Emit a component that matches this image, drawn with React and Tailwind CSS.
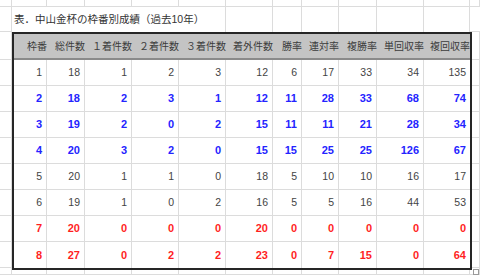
import React from 'react';

// column widths of the sheet (A .. M), px
const sheetCols = [12, 35, 38, 47, 47, 47, 47, 29, 37, 38, 47, 46, 10];
// inner widths of table columns B .. L (inside the 2px frame)
const tableCols = [33, 38, 47, 47, 47, 47, 29, 37, 38, 47, 46];

const headers = ['枠番', '総件数', '１着件数', '２着件数', '３着件数', '着外件数', '勝率', '連対率', '複勝率', '単回収率', '複回収率'];

const rows = [
  { tone: 'plain', v: [1, 18, 1, 2, 3, 12, 6, 17, 33, 34, 135] },
  { tone: 'blue', v: [2, 18, 2, 3, 1, 12, 11, 28, 33, 68, 74] },
  { tone: 'blue', v: [3, 19, 2, 0, 2, 15, 11, 11, 21, 28, 34] },
  { tone: 'blue', v: [4, 20, 3, 2, 0, 15, 15, 25, 25, 126, 67] },
  { tone: 'plain', v: [5, 20, 1, 1, 0, 18, 5, 10, 10, 16, 17] },
  { tone: 'plain', v: [6, 19, 1, 0, 2, 16, 5, 5, 16, 44, 53] },
  { tone: 'red', v: [7, 20, 0, 0, 0, 20, 0, 0, 0, 0, 0] },
  { tone: 'red', v: [8, 27, 0, 2, 2, 23, 0, 7, 15, 0, 64] },
];

const toneClass = {
  plain: 'text-[#444] text-[10.5px]',
  blue: 'text-[#2424ff] text-[11px] font-bold',
  red: 'text-[#ff1f1f] text-[11px] font-bold',
};

const GridRow = ({ h }) => (
  <div className="flex" style={{ height: h }}>
    {sheetCols.map((w, i) => (
      <div key={i} className="border-r border-b border-[#dcdcdc] shrink-0" style={{ width: w }} />
    ))}
  </div>
);

// side column cells (A and M) next to the framed table
const SideCol = ({ w }) => (
  <div className="flex flex-col shrink-0" style={{ width: w }}>
    <div className="h-[28px] border-r border-b border-[#dcdcdc]" />
    {rows.map((_, i) => (
      <div key={i} className="h-[26px] border-r border-b border-[#dcdcdc]" />
    ))}
    <div className="h-[2px] border-r border-[#dcdcdc]" />
  </div>
);

export default function App() {
  return (
    <div className="w-[480px] h-[275px] overflow-hidden bg-white font-['Liberation_Sans','Noto_Sans_CJK_JP',sans-serif]">
      <GridRow h={7} />

      {/* Title row */}
      <div className="flex h-[25px]">
        <div className="w-[12px] shrink-0 border-r border-b border-[#dcdcdc]" />
        <div className="w-[214px] shrink-0 border-r border-[#dcdcdc] flex items-center pl-[2px] text-[10.5px] text-[#333] whitespace-nowrap">
          表．中山金杯の枠番別成績（過去10年）
        </div>
        {sheetCols.slice(6, 12).map((w, i) => (
          <div key={i} className="shrink-0 border-r border-[#dcdcdc]" style={{ width: w }} />
        ))}
        <div className="w-[10px] shrink-0 border-b border-[#dcdcdc]" />
      </div>

      <div className="flex">
        <SideCol w={12} />

        <div className="w-[460px] shrink-0 border-2 border-[#262626]">
          {/* header */}
          <div className="flex h-[26px] bg-[#c4c4c4] border-b-2 border-[#8a8a8a]">
            {headers.map((t, i) => (
              <div
                key={t}
                className="shrink-0 flex items-center justify-end text-[10px] text-[#3c3c3c] whitespace-nowrap"
                style={{ width: tableCols[i] }}
              >
                {t}
              </div>
            ))}
          </div>

          {rows.map((r, ri) => (
            <div key={ri} className={`flex h-[26px] ${ri < rows.length - 1 ? 'border-b border-[#dcdcdc]' : ''}`}>
              {r.v.map((n, ci) => (
                <div
                  key={ci}
                  className={`shrink-0 flex items-center justify-end pr-[4px] ${ci < 10 ? 'border-r border-[#dcdcdc]' : ''} ${toneClass[r.tone]}`}
                  style={{ width: tableCols[ci] }}
                >
                  {n}
                </div>
              ))}
            </div>
          ))}
        </div>

        <div className="relative">
          <SideCol w={8} />
          <div className="absolute left-[1px] bottom-[-5px] w-[6px] h-[6px] border border-[#9a9a9a] bg-white" />
        </div>
      </div>

      <GridRow h={5} />
    </div>
  );
}
